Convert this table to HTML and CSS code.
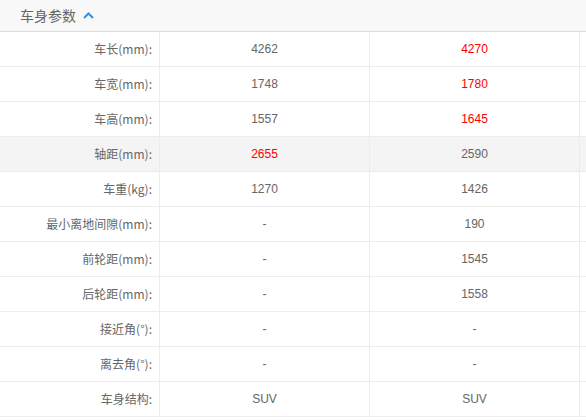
FILE: index.html
```html
<!DOCTYPE html>
<html lang="zh">
<head>
<meta charset="utf-8">
<link rel="stylesheet" href="styles.css">
</head>
<body>
<div class="panel">
  <div class="head">
    <span class="title">车身参数</span>
    <svg class="chev" width="11" height="7" viewBox="0 0 11 7"><polyline points="1,6 5.5,1.5 10,6" fill="none" stroke="#3b8fd9" stroke-width="2"/></svg>
  </div>
  <div class="grid">
    <div class="row"><div class="lab">车长(mm):</div><div class="val">4262</div><div class="val red">4270</div><div class="pad"></div></div>
    <div class="row"><div class="lab">车宽(mm):</div><div class="val">1748</div><div class="val red">1780</div><div class="pad"></div></div>
    <div class="row"><div class="lab">车高(mm):</div><div class="val">1557</div><div class="val red">1645</div><div class="pad"></div></div>
    <div class="row hl"><div class="lab">轴距(mm):</div><div class="val red">2655</div><div class="val">2590</div><div class="pad"></div></div>
    <div class="row"><div class="lab">车重(kg):</div><div class="val">1270</div><div class="val">1426</div><div class="pad"></div></div>
    <div class="row"><div class="lab">最小离地间隙(mm):</div><div class="val">-</div><div class="val">190</div><div class="pad"></div></div>
    <div class="row"><div class="lab">前轮距(mm):</div><div class="val">-</div><div class="val">1545</div><div class="pad"></div></div>
    <div class="row"><div class="lab">后轮距(mm):</div><div class="val">-</div><div class="val">1558</div><div class="pad"></div></div>
    <div class="row"><div class="lab">接近角(°):</div><div class="val">-</div><div class="val">-</div><div class="pad"></div></div>
    <div class="row"><div class="lab">离去角(°):</div><div class="val">-</div><div class="val">-</div><div class="pad"></div></div>
    <div class="row"><div class="lab">车身结构:</div><div class="val">SUV</div><div class="val">SUV</div><div class="pad"></div></div>
  </div>
</div>
</body>
</html>
```
FILE: styles.css
```css
html, body {
  margin: 0;
  padding: 0;
  background: #fff;
}
body {
  font-family: "Liberation Sans", "Noto Sans CJK SC", sans-serif;
  color: #666;
  font-size: 12px;
}
.panel {
  width: 586px;
}
.head {
  height: 31px;
  background: #f8f8f8;
  border-bottom: 1px solid #dcdcdc;
  display: flex;
  align-items: center;
  padding-left: 20px;
  gap: 7px;
}
.title {
  font-size: 14px;
  color: #666;
  font-family: "Noto Sans CJK SC", sans-serif;
  line-height: 31px;
}
.chev {
  display: block;
  margin-top: -1px;
}
.row {
  display: grid;
  grid-template-columns: 160px 210px 210px 1fr;
  height: 35px;
  border-bottom: 1px solid #ececec;
  box-sizing: border-box;
}
.row.hl {
  background: #f4f4f4;
}
.row > div {
  border-right: 1px solid #ececec;
  display: flex;
  align-items: center;
  line-height: 34px;
}
.row > .pad {
  border-right: none;
}
.lab {
  justify-content: flex-end;
  padding-right: 7px;
  font-family: "Noto Sans CJK SC", sans-serif;
}
.val {
  justify-content: center;
}
.red {
  color: #f00;
}
```
